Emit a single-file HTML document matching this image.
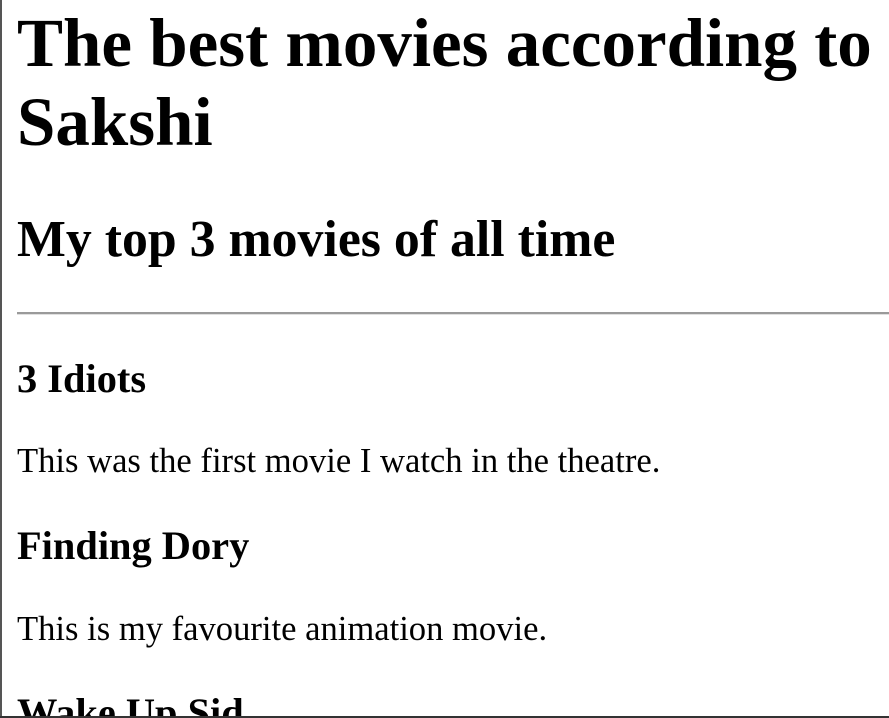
<!DOCTYPE html>
<html><head><meta charset="utf-8"><style>
html,body{margin:0;padding:0;background:#fff;overflow:hidden;width:889px;height:718px}
body{font-family:"Liberation Serif",serif;color:#000;padding:4px 0 0 17px;position:relative;box-sizing:border-box}
h1{font-size:69px;margin:0 0 47px;line-height:1.15;font-weight:bold}
h2{font-size:51.8px;margin:43px 0;line-height:1.15}
h3{font-size:40.4px;margin:40.4px 0;line-height:1.15}
p{font-size:34.6px;margin:40px 0 34.6px;line-height:1.15}
hr{margin:17px 0;width:1000px;border:0;border-top:2px solid #9a9a9a;border-bottom:1px solid #e0e0e0;height:0}
.l{position:fixed;left:0;top:0;width:2px;height:718px;background:#555}
.b{position:fixed;left:0;bottom:0;width:889px;height:2px;background:#333}
</style></head><body>
<h1>The best movies according to Sakshi</h1>
<h2>My top 3 movies of all time</h2>
<hr>
<h3>3 Idiots</h3>
<p>This was the first movie I watch in the theatre.</p>
<h3>Finding Dory</h3>
<p>This is my favourite animation movie.</p>
<h3>Wake Up Sid</h3>
<div class="l"></div><div class="b"></div>
</body></html>
